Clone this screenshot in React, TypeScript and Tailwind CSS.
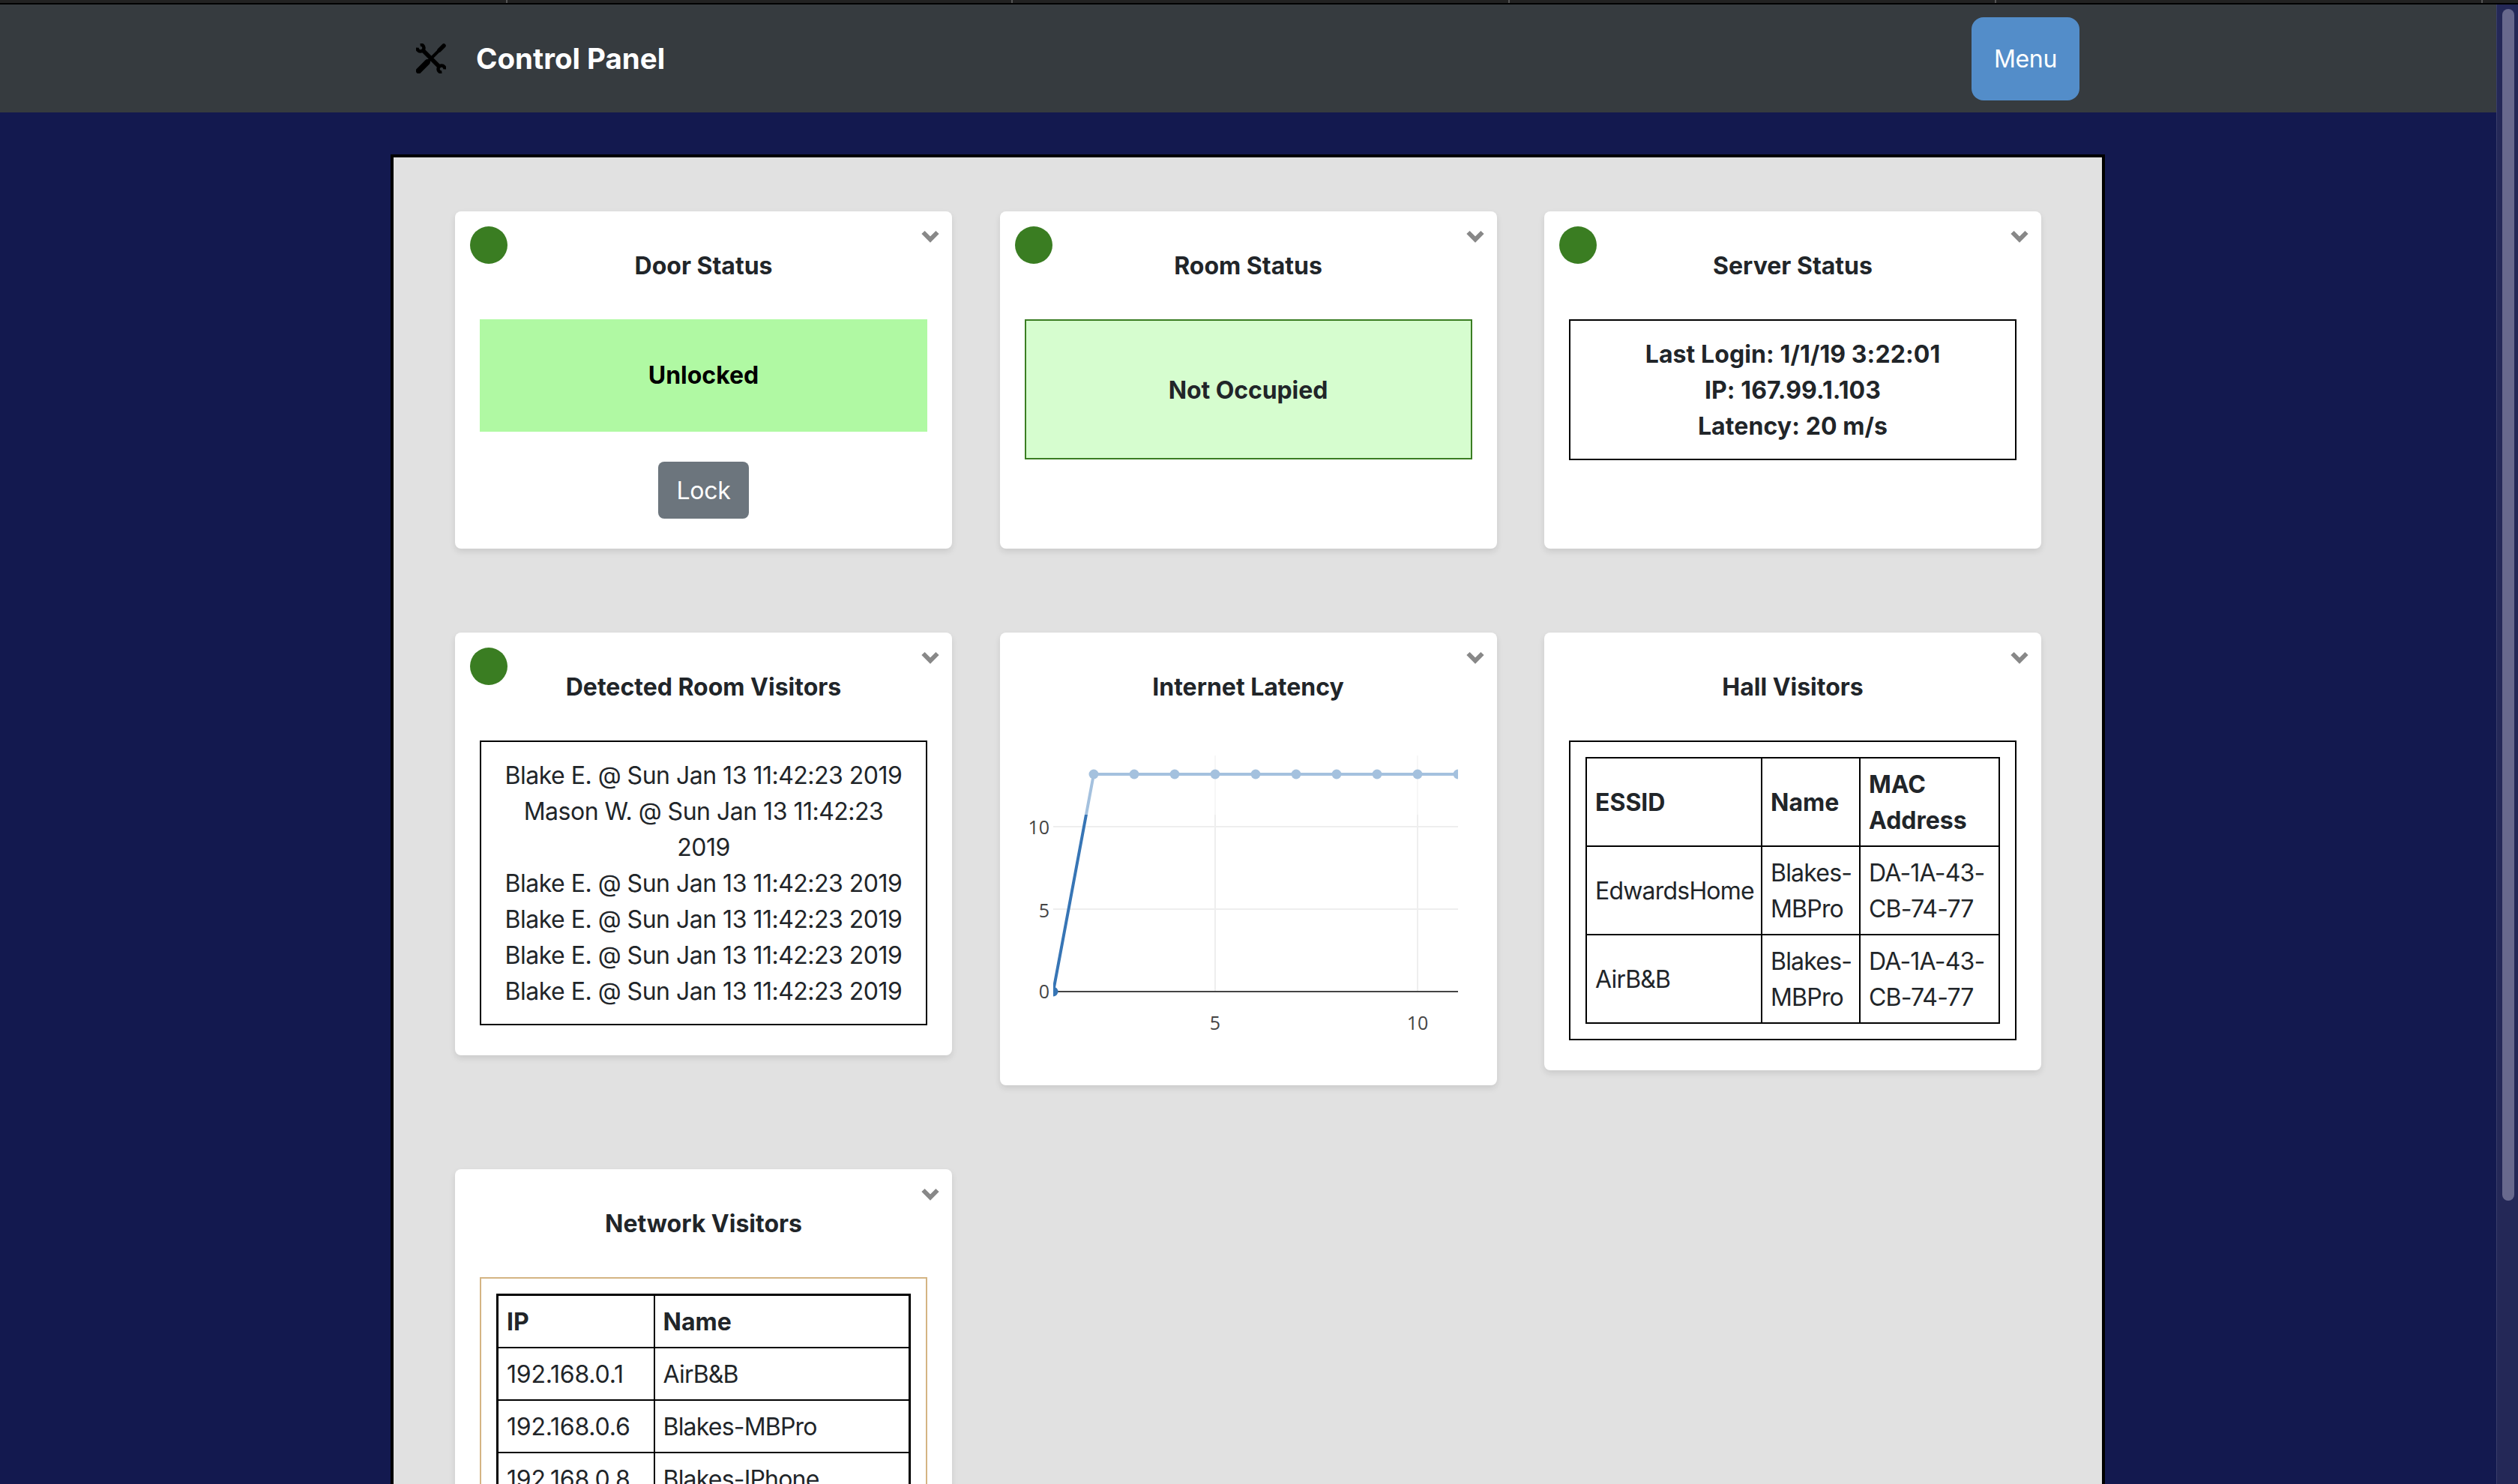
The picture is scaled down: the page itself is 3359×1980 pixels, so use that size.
import { ReactNode } from 'react';

const visitors = [
    'Blake E. @ Sun Jan 13 11:42:23 2019',
    'Mason W. @ Sun Jan 13 11:42:23 2019',
    'Blake E. @ Sun Jan 13 11:42:23 2019',
    'Blake E. @ Sun Jan 13 11:42:23 2019',
    'Blake E. @ Sun Jan 13 11:42:23 2019',
    'Blake E. @ Sun Jan 13 11:42:23 2019',
];

const hallVisitors = [
    { essid: 'EdwardsHome', name: 'Blakes-MBPro', mac: 'DA-1A-43-CB-74-77' },
    { essid: 'AirB&B', name: 'Blakes-MBPro', mac: 'DA-1A-43-CB-74-77' },
];

const networkVisitors = [
    { ip: '192.168.0.1', name: 'AirB&B' },
    { ip: '192.168.0.6', name: 'Blakes-MBPro' },
    { ip: '192.168.0.8', name: 'Blakes-IPhone' },
];

const tabSeparators = [675, 1349, 2012, 2661, 3310];

function ToolsIcon() {
    return (
        <svg viewBox="0 0 40 40" className="w-10 h-10 shrink-0" fill="none" stroke="#000">
            {/* Spanner */}
            <path d="M8 8 L32 32" strokeWidth="5.5" />
            <path d="M5.61 1.52 A4.5 4.5 0 1 1 1.52 5.61" strokeWidth="4.5" />
            <path d="M34.39 38.48 A4.5 4.5 0 1 1 38.48 34.39" strokeWidth="4.5" />
            {/* Screwdriver */}
            <path d="M3.5 36.5 L15 25" strokeWidth="7.5" strokeLinecap="round" />
            <path d="M15 25 L30 10" strokeWidth="4" />
            <path d="M31 9 L37 3" strokeWidth="5.5" strokeLinecap="round" />
        </svg>
    );
}

function Chevron() {
    return (
        <svg viewBox="0 0 26 18" className="absolute top-[24px] right-[16px] w-[26px] h-[18px]" fill="none">
            <path d="M3.5 4 L13 13.5 L22.5 4" stroke="#888888" strokeWidth="6" />
        </svg>
    );
}

function Card({ title, status, children }: { title: string; status?: boolean; children: ReactNode }) {
    return (
        <div className="relative bg-white rounded-lg shadow-[0_4px_8px_rgba(0,0,0,0.1)] min-h-[450px] px-[33px] pt-[49px] pb-[40px] flex flex-col">
            {status && <div className="absolute top-[20px] left-[20px] w-[50px] h-[50px] rounded-full bg-[#3a7d22]" />}
            <Chevron />
            <h5 className="text-center font-bold text-[#212529] mb-[47px]">{title}</h5>
            {children}
        </div>
    );
}

function LatencyChart() {
    const points = [2, 3, 4, 5, 6, 7, 8, 9, 10, 11].map((n) => 38 + (n - 1) * 54);
    const labelClass = "font-[family-name:'Open_Sans',sans-serif]";

    return (
        <svg viewBox="0 0 597 420" className="w-[597px] h-[420px] block">
            <defs>
                <clipPath id="plot">
                    <rect x="38" y="0" width="540" height="350" />
                </clipPath>
            </defs>

            {/* Grid */}
            <g stroke="#eeeeee" strokeWidth="2">
                <line x1="254" y1="20" x2="254" y2="335" />
                <line x1="524" y1="20" x2="524" y2="335" />
                <line x1="38" y1="225" x2="578" y2="225" />
                <line x1="38" y1="115" x2="578" y2="115" />
            </g>
            <line x1="38" y1="335" x2="578" y2="335" stroke="#444444" strokeWidth="2" />

            {/* Series */}
            <g clipPath="url(#plot)">
                <polyline
                    points={`38,335 ${points[0]},45 ${points[9]},45`}
                    fill="none"
                    stroke="#3775b5"
                    strokeWidth="4"
                />
                <circle cx="38" cy="335" r="6.5" fill="#3775b5" />
                {points.map((x) => (
                    <circle key={x} cx={x} cy="45" r="6.5" fill="#3775b5" />
                ))}
            </g>

            <rect x="38" y="0" width="540" height="99" fill="#ffffff" fillOpacity="0.55" />

            {/* Axis labels */}
            <g fill="#444444" fontSize="25" className={labelClass}>
                <text x="33" y="125" textAnchor="end">10</text>
                <text x="33" y="236" textAnchor="end">5</text>
                <text x="33" y="344" textAnchor="end">0</text>
                <text x="254" y="386" textAnchor="middle">5</text>
                <text x="524" y="386" textAnchor="middle">10</text>
            </g>
        </svg>
    );
}

export default function App() {
    const headClass = 'border-2 border-black px-[11px] pt-[11px] pb-[9px] align-middle text-left font-bold';
    const cellClass = 'border-2 border-black px-[11px] pt-[11px] pb-[9px] align-middle text-left tracking-[-0.8px]';
    const ipCellClass = 'border-2 border-black px-[11px] pt-[11px] pb-[9px] align-middle text-left tracking-[-0.2px]';

    return (
        <div className="h-screen overflow-hidden flex flex-col bg-[#13194f] font-[family-name:Inter,sans-serif] text-[32px] leading-[48px] text-[#212529]">
            {/* Browser tab strip */}
            <div className="h-[6px] shrink-0 bg-[#222222] border-b-2 border-black flex">
                {tabSeparators.map((x, i) => (
                    <div
                        key={x}
                        className="w-[2px] h-[4px] bg-[#555555]"
                        style={{ marginLeft: i === 0 ? x : x - tabSeparators[i - 1] - 2 }}
                    />
                ))}
            </div>

            <div className="flex-1 min-h-0 flex">
                <div className="flex-1 min-w-0 flex flex-col">
                    {/* Navbar */}
                    <nav className="h-[144px] shrink-0 bg-[#363b3f] flex items-center pl-[555px] pr-[556px]">
                        <ToolsIcon />
                        <span className="ml-[40px] text-[38.5px] leading-[60px] font-bold text-white">Control Panel</span>
                        <button className="ml-auto w-[144px] h-[111px] pt-[2px] rounded-2xl bg-[#538dc9] text-white tracking-[-0.3px]">
                            Menu
                        </button>
                    </nav>

                    {/* Panel */}
                    <main className="mt-[56px] ml-[521px] w-[2287px] flex-1 bg-[#e1e1e1] border-4 border-black border-b-0 pl-[82px] pr-[81px] pt-[72px] grid grid-cols-3 gap-x-[63.5px] gap-y-[112px] items-start content-start">
                        <Card title="Door Status" status>
                            <div className="h-[150px] bg-[#b0f9a3] flex items-center justify-center font-bold text-black">
                                Unlocked
                            </div>
                            <button className="self-center mt-[40px] w-[121px] h-[76px] pt-[1px] rounded-lg bg-[#6c757d] text-white tracking-[-0.3px]">
                                Lock
                            </button>
                        </Card>

                        <Card title="Room Status" status>
                            <div className="h-[187px] pt-[2px] bg-[#d6fdcf] border-2 border-[#3a7d22] flex items-center justify-center font-bold tracking-[-0.1px]">
                                Not Occupied
                            </div>
                        </Card>

                        <Card title="Server Status" status>
                            <div className="border-2 border-black pt-[21px] pb-[19px] text-center font-bold tracking-[0.1px]">
                                <div>Last Login: 1/1/19 3:22:01</div>
                                <div>IP: 167.99.1.103</div>
                                <div>Latency: 20 m/s</div>
                            </div>
                        </Card>

                        <Card title="Detected Room Visitors" status>
                            <div className="border-2 border-black px-[20px] pt-[21px] pb-[19px] text-center tracking-[-0.5px]">
                                {visitors.map((v, i) => (
                                    <div key={i}>{v}</div>
                                ))}
                            </div>
                        </Card>

                        <Card title="Internet Latency">
                            <LatencyChart />
                        </Card>

                        <Card title="Hall Visitors">
                            <div className="border-2 border-black p-[20px]">
                                <table className="w-full table-fixed border-collapse border-2 border-black">
                                    <thead>
                                        <tr>
                                            <th className={`${headClass} w-[234px]`}>ESSID</th>
                                            <th className={`${headClass} w-[131px]`}>Name</th>
                                            <th className={headClass}>MAC Address</th>
                                        </tr>
                                    </thead>
                                    <tbody>
                                        {hallVisitors.map((row) => (
                                            <tr key={row.essid}>
                                                <td className={cellClass}>{row.essid}</td>
                                                <td className={cellClass}>{row.name}</td>
                                                <td className={cellClass}>{row.mac}</td>
                                            </tr>
                                        ))}
                                    </tbody>
                                </table>
                            </div>
                        </Card>

                        <Card title="Network Visitors">
                            <div className="border-2 border-[#d4b483] p-[20px]">
                                <table className="w-full table-fixed border-collapse border-[3px] border-black">
                                    <thead>
                                        <tr>
                                            <th className={`${headClass} w-[209px]`}>IP</th>
                                            <th className={headClass}>Name</th>
                                        </tr>
                                    </thead>
                                    <tbody>
                                        {networkVisitors.map((row) => (
                                            <tr key={row.ip}>
                                                <td className={ipCellClass}>{row.ip}</td>
                                                <td className={cellClass}>{row.name}</td>
                                            </tr>
                                        ))}
                                    </tbody>
                                </table>
                            </div>
                        </Card>
                    </main>
                </div>

                {/* Scrollbar */}
                <div className="w-[29px] shrink-0 bg-[#242857] border-l border-[#3a3e6b] pl-[7px] pt-[6px]">
                    <div className="w-[16px] h-[1590px] rounded-full bg-[#68698d]" />
                </div>
            </div>
        </div>
    );
}
